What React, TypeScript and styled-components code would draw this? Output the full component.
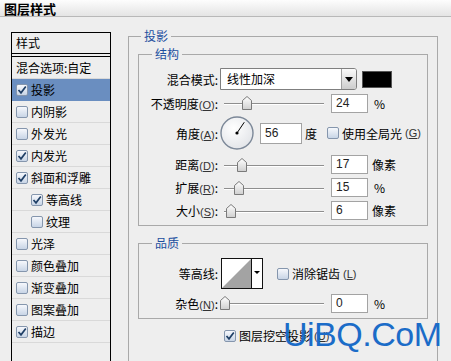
import React from 'react';
import styled, { createGlobalStyle } from 'styled-components';

const GlobalStyle = createGlobalStyle`
  * { box-sizing: border-box; }
  body {
    margin: 0;
    background: #eeeeee;
  }
`;

const FONT = `"Noto Sans CJK SC", "Liberation Sans", sans-serif`;

const Window = styled.div`
  position: relative;
  width: 451px;
  height: 361px;
  overflow: hidden;
  background: #eeeeee;
  font-family: ${FONT};
  font-size: 12px;
  color: #000;
`;

const TitleBar = styled.div`
  height: 17px;
  padding-left: 4px;
  background: linear-gradient(#fdfdfd, #e4e4e4);
  border-bottom: 1px solid #b8b8b8;
  font-size: 13px;
  font-weight: bold;
  line-height: 17px;
`;

const Body = styled.div`
  display: flex;
  align-items: flex-start;
  padding-left: 11px;
  margin-top: 12px;
`;

// Left style list
const StyleList = styled.div`
  flex: none;
  width: 100px;
  height: 340px;
  margin-top: 3px;
  border: 1px solid #000;
`;

const ListHeader = styled.div`
  height: 21px;
  padding-left: 4px;
  border-bottom: 1px solid #000;
  line-height: 20px;
`;

const ListItem = styled.div<{ $selected?: boolean; $indent?: boolean; $blend?: boolean }>`
  display: flex;
  align-items: center;
  gap: 3px;
  height: ${(p) => (p.$blend ? 23 : 22)}px;
  margin-top: ${(p) => (p.$blend ? 2 : 0)}px;
  padding-left: ${(p) => (p.$indent ? 19 : 4)}px;
  border-top: ${(p) => (p.$blend ? '1px solid #000' : 'none')};
  border-bottom: 1px solid ${(p) => (p.$selected ? '#6a8ec0' : '#d9d9d9')};
  background: ${(p) => (p.$selected ? '#6a8ec0' : 'transparent')};
  white-space: nowrap;
`;

const Box = styled.span`
  flex: none;
  display: inline-flex;
  align-items: center;
  justify-content: center;
  width: 12px;
  height: 12px;
  border: 1px solid #8596ad;
  border-radius: 2px;
  background: linear-gradient(#f6f8fc, #c8d5e6);
`;

const Check: React.FC<{ checked?: boolean }> = ({ checked }) => (
  <Box>
    {checked && (
      <svg width="10" height="10" viewBox="0 0 10 10">
        <path d="M1.5 5 L4 7.8 L8.8 1.5" fill="none" stroke="#1f3f66" strokeWidth="1.7" />
      </svg>
    )}
  </Box>
);

// Right side group boxes
const OuterGroup = styled.fieldset`
  flex: none;
  width: 310px;
  height: 400px;
  margin: 0 0 0 17px;
  padding: 0 9px;
  min-width: 0;
  border: 1px solid #a9a9a9;
`;

const Legend = styled.legend<{ $inset: number }>`
  margin-left: ${(p) => p.$inset}px;
  padding: 0 3px;
  color: #1c4e9e;
  font-size: 12px;
  line-height: 14px;
`;

const InnerGroup = styled.fieldset<{ $mt: number; $pt: number; $pb: number }>`
  margin: ${(p) => p.$mt}px 0 0;
  padding: ${(p) => p.$pt}px 0 ${(p) => p.$pb}px;
  min-width: 0;
  border: 1px solid #a9a9a9;
`;

const Row = styled.div<{ $h: number; $mt?: number }>`
  display: flex;
  align-items: center;
  height: ${(p) => p.$h}px;
  margin-top: ${(p) => p.$mt ?? 0}px;
  white-space: nowrap;
`;

const Label = styled.div`
  flex: none;
  width: 79px;
  text-align: right;
`;

const Key = styled.span`
  font-family: "Liberation Sans", sans-serif;
  font-size: 11px;
  color: #333;
`;

const Hot: React.FC<{ k: string }> = ({ k }) => (
  <Key>
    (<u>{k}</u>)
  </Key>
);

const Select = styled.div`
  display: flex;
  width: 137px;
  height: 22px;
  margin-left: 2px;
  border: 1px solid #7f7f7f;
  border-radius: 0 3px 3px 0;
  background: #fff;
`;

const SelectText = styled.div`
  flex: 1;
  padding-left: 6px;
  line-height: 20px;
`;

const SelectButton = styled.div`
  display: flex;
  align-items: center;
  justify-content: center;
  width: 15px;
  border-left: 1px solid #a0a0a0;
  border-radius: 0 2px 2px 0;
  background: linear-gradient(#fafafa, #cdcdcd);

  &::after {
    content: '';
    border-left: 4px solid transparent;
    border-right: 4px solid transparent;
    border-top: 5px solid #000;
  }
`;

const Swatch = styled.div`
  width: 30px;
  height: 17px;
  margin-left: 5px;
  border: 1px solid #555;
  background: #000;
`;

const SliderTrack = styled.div`
  position: relative;
  flex: none;
  width: 100px;
  height: 14px;
  margin-left: 6px;

  &::before {
    content: '';
    position: absolute;
    left: 0;
    right: 0;
    top: 7px;
    height: 1px;
    background: #8e8e8e;
    box-shadow: 0 1px 0 #fff;
  }
`;

const Thumb = styled.svg`
  position: absolute;
  top: 0;
`;

const Slider: React.FC<{ at: number }> = ({ at }) => (
  <SliderTrack>
    <Thumb width="10" height="14" viewBox="0 0 10 14" style={{ left: at }}>
      <defs>
        <linearGradient id="tg" x1="0" y1="0" x2="0" y2="1">
          <stop offset="0" stopColor="#ffffff" />
          <stop offset="1" stopColor="#cfcfcf" />
        </linearGradient>
      </defs>
      <path d="M5 0.5 L9.5 4.5 V13.5 H0.5 V4.5 Z" fill="url(#tg)" stroke="#7a7a7a" />
    </Thumb>
  </SliderTrack>
);

const NumBox = styled.div<{ $w?: number; $ml?: number; $h?: number }>`
  flex: none;
  width: ${(p) => p.$w ?? 37}px;
  height: ${(p) => p.$h ?? 19}px;
  margin-left: ${(p) => p.$ml ?? 7}px;
  padding-left: 4px;
  border: 1px solid #a3a3a3;
  background: #fff;
  font-family: "Liberation Sans", sans-serif;
  font-size: 12px;
  line-height: ${(p) => (p.$h ?? 19) - 2}px;
  color: #222;
`;

const Unit = styled.span<{ $ml?: number }>`
  margin-left: ${(p) => p.$ml ?? 6}px;
`;

const CheckLabel = styled.label<{ $ml: number }>`
  display: flex;
  align-items: center;
  gap: 3px;
  margin-left: ${(p) => p.$ml}px;
`;

const Dial: React.FC<{ angle: number }> = ({ angle }) => {
  const r = (angle * Math.PI) / 180;
  const x = 17 + 13 * Math.cos(r);
  const y = 17 - 13 * Math.sin(r);
  return (
    <svg width="34" height="34" viewBox="0 0 34 34" style={{ marginLeft: 2, flex: 'none' }}>
      <defs>
        <radialGradient id="dg" cx="0.4" cy="0.35" r="0.7">
          <stop offset="0" stopColor="#ffffff" />
          <stop offset="1" stopColor="#e2e4e8" />
        </radialGradient>
      </defs>
      <circle cx="17" cy="17" r="16" fill="url(#dg)" stroke="#7c8898" strokeWidth="1.4" />
      <line x1="17" y1="17" x2={x} y2={y} stroke="#000" strokeWidth="1" />
      <circle cx="17" cy="17" r="1.6" fill="#000" />
    </svg>
  );
};

const ContourBox = styled.div`
  display: flex;
  width: 42px;
  height: 31px;
  margin-left: 3px;
  border: 1px solid #111;
  background: #fff;
`;

const ContourArrow = styled.div`
  flex: 1;
  display: flex;
  justify-content: center;
  padding-top: 12px;
  border-left: 1px solid #111;

  &::after {
    content: '';
    width: 0;
    height: 0;
    border-left: 3px solid transparent;
    border-right: 3px solid transparent;
    border-top: 3px solid #000;
  }
`;

const KnockoutRow = styled.div`
  display: flex;
  align-items: center;
  gap: 3px;
  margin-top: 8px;
  padding-left: 86px;
  white-space: nowrap;
`;

// site watermark stamped over the screenshot
const Watermark = styled.div`
  position: absolute;
  left: 283px;
  top: 314px;
  font-family: "Liberation Sans", Arial, sans-serif;
  font-size: 34px;
  line-height: 40px;
  letter-spacing: -0.5px;
  color: #1b6cc8;
`;

const items = [
  { name: '投影', checked: true, selected: true },
  { name: '内阴影' },
  { name: '外发光' },
  { name: '内发光', checked: true },
  { name: '斜面和浮雕', checked: true },
  { name: '等高线', checked: true, indent: true },
  { name: '纹理', indent: true },
  { name: '光泽' },
  { name: '颜色叠加' },
  { name: '渐变叠加' },
  { name: '图案叠加' },
  { name: '描边', checked: true },
];

const App: React.FC = () => (
  <Window>
    <GlobalStyle />
    <TitleBar>图层样式</TitleBar>
    <Body>
      <StyleList>
        <ListHeader>样式</ListHeader>
        <ListItem $blend>混合选项:自定</ListItem>
        {items.map((it) => (
          <ListItem key={it.name} $selected={it.selected} $indent={it.indent}>
            <Check checked={it.checked} />
            {it.name}
          </ListItem>
        ))}
      </StyleList>

      <OuterGroup>
        <Legend $inset={3}>投影</Legend>
        <InnerGroup $mt={4} $pt={6} $pb={3}>
          <Legend $inset={13}>结构</Legend>
          <Row $h={24}>
            <Label>混合模式:</Label>
            <Select>
              <SelectText>线性加深</SelectText>
              <SelectButton />
            </Select>
            <Swatch />
          </Row>
          <Row $h={24}>
            <Label>
              不透明度<Hot k="O" />:
            </Label>
            <Slider at={18} />
            <NumBox>24</NumBox>
            <Unit>%</Unit>
          </Row>
          <Row $h={36}>
            <Label>
              角度<Hot k="A" />:
            </Label>
            <Dial angle={56} />
            <NumBox $w={42} $h={21} $ml={6}>56</NumBox>
            <Unit $ml={3}>度</Unit>
            <CheckLabel $ml={10}>
              <Check />
              使用全局光<Hot k="G" />
            </CheckLabel>
          </Row>
          <Row $h={23} $mt={2}>
            <Label>
              距离<Hot k="D" />:
            </Label>
            <Slider at={13} />
            <NumBox>17</NumBox>
            <Unit $ml={4}>像素</Unit>
          </Row>
          <Row $h={23}>
            <Label>
              扩展<Hot k="R" />:
            </Label>
            <Slider at={10} />
            <NumBox>15</NumBox>
            <Unit>%</Unit>
          </Row>
          <Row $h={23}>
            <Label>
              大小<Hot k="S" />:
            </Label>
            <Slider at={2} />
            <NumBox>6</NumBox>
            <Unit $ml={4}>像素</Unit>
          </Row>
        </InnerGroup>

        <InnerGroup $mt={10} $pt={8} $pb={4}>
          <Legend $inset={13}>品质</Legend>
          <Row $h={31}>
            <Label>等高线:</Label>
            <ContourBox>
              <svg width="29" height="29" viewBox="0 0 29 29">
                <path d="M0 29 L29 0 V29 Z" fill="#a3a3a3" />
              </svg>
              <ContourArrow />
            </ContourBox>
            <CheckLabel $ml={14}>
              <Check />
              消除锯齿<Hot k="L" />
            </CheckLabel>
          </Row>
          <Row $h={22} $mt={3}>
            <Label>
              杂色<Hot k="N" />:
            </Label>
            <Slider at={-4} />
            <NumBox>0</NumBox>
            <Unit>%</Unit>
          </Row>
        </InnerGroup>

        <KnockoutRow>
          <Check checked />
          图层挖空投影<Hot k="U" />
        </KnockoutRow>
      </OuterGroup>
    </Body>
    <Watermark>UiBQ.CoM</Watermark>
  </Window>
);

export default App;
